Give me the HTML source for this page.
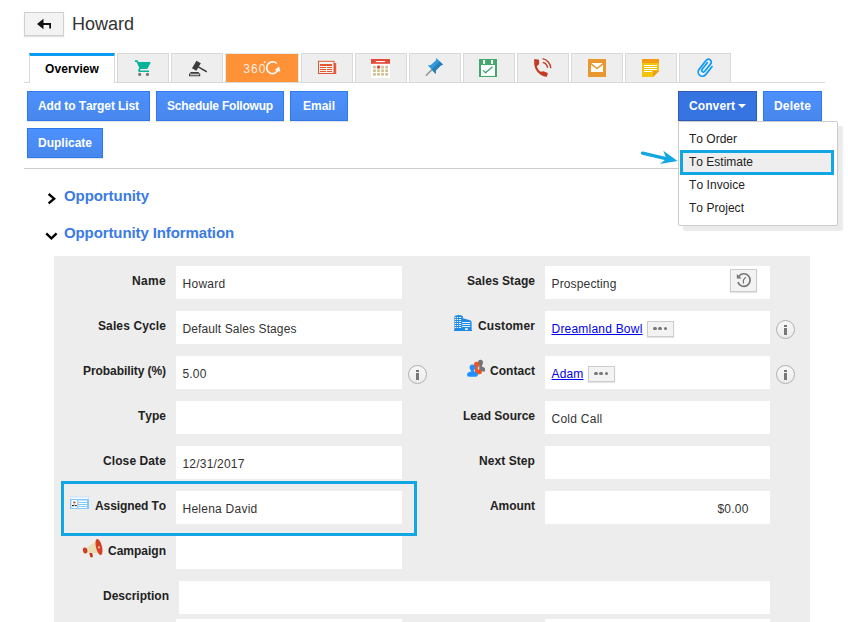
<!DOCTYPE html>
<html><head><meta charset="utf-8">
<title>Howard</title>
<style>
*{box-sizing:border-box;}
html,body{margin:0;padding:0;}
body{font-kerning:none;width:848px;height:622px;overflow:hidden;background:#fff;font-family:"Liberation Sans",Arial,sans-serif;font-size:12px;color:#222;position:relative;}
.abs{position:absolute;}
svg{position:absolute;overflow:visible;}
.back{left:24px;top:12px;width:40px;height:24px;background:#f3f3f3;border:1px solid #d0d0d0;box-shadow:0 1px 1px rgba(0,0,0,.12);}
.title{left:72px;top:13px;font-size:18px;line-height:22px;color:#333;white-space:nowrap;}
.ovw{left:45px;top:62px;font-weight:bold;font-size:12px;color:#000;line-height:14px;white-space:nowrap;}
.tab{position:absolute;top:53px;height:29px;width:52px;background:#eee;border:1px solid #d9d9d9;border-bottom:none;}
.tab.act{background:#fff;border-top:3px solid #0a9cf5;height:30px;}
.tab.t360{background:#ff9137;border-color:#e6e9ea;}
.tabline{left:24px;top:82px;width:801px;height:1px;background:#d9d9d9;}
.btn{position:absolute;height:30px;line-height:28px;color:#fff;font-weight:bold;font-size:12px;text-align:center;border:1px solid #3079ed;background:linear-gradient(#4d90fe,#4787ed);box-shadow:0 1px 1px rgba(0,0,0,.1);white-space:nowrap;}
.caret{left:738px;top:104px;width:0;height:0;border:4px solid transparent;border-top-color:#fff;}
.hr{left:24px;top:168px;width:654px;height:1px;background:#ccc;}
.sec{position:absolute;font-size:15px;font-weight:bold;color:#3b7be5;white-space:nowrap;line-height:18px;}
.panel{left:54px;top:256px;width:756px;height:366px;background:#ededed;}
.lbl{position:absolute;font-weight:bold;font-size:12px;color:#222;text-align:right;white-space:nowrap;line-height:14px;width:140px;}
.inp{position:absolute;background:#fff;height:33px;line-height:14px;padding:11px 0 0 6.5px;font-size:12px;color:#333;white-space:nowrap;}
.inp a{color:#0000ee;text-decoration:underline;}
.info{position:absolute;width:19px;height:19px;border:1px solid #b0b0b0;border-radius:50%;background:linear-gradient(#f8f8f8,#ececec);}
.info:before{content:"";position:absolute;left:7px;top:4px;width:3px;height:2px;background:#777;}
.info:after{content:"";position:absolute;left:7px;top:7px;width:3px;height:7px;background:#777;}
.more{position:absolute;width:27px;height:16px;background:#f3f3f3;border:1px solid #ccc;box-shadow:0 1px 1px rgba(0,0,0,.1);}
.more i{position:absolute;top:5px;width:3.4px;height:3.4px;border-radius:50%;background:#777;}
.hist{left:730px;top:269px;width:27px;height:23px;background:#f3f3f3;border:1px solid #ccc;box-shadow:0 1px 1px rgba(0,0,0,.1);}
.dd{left:678px;top:121px;width:160px;height:105px;background:#fff;border:1px solid #ccc;border-radius:2px;box-shadow:5px 5px 1px rgba(0,0,0,.08);}
.ddi{position:absolute;left:689px;font-size:12px;color:#222;line-height:14px;white-space:nowrap;}
.hl{position:absolute;border:3px solid #12a6e2;}
</style></head><body>
<div class="abs back"></div>
<div class="abs title" style="letter-spacing:-0.004px;">Howard</div>
<div class="abs tabline"></div>
<div class="tab act" style="left:29px;width:86px;"></div>
<div class="abs ovw" style="letter-spacing:0.079px;">Overview</div>
<div class="tab" style="left:117px"></div>
<div class="tab" style="left:171px"></div>
<div class="tab t360" style="left:225px;width:74px;"></div>
<div class="tab" style="left:301px"></div>
<div class="tab" style="left:355px"></div>
<div class="tab" style="left:409px"></div>
<div class="tab" style="left:463px"></div>
<div class="tab" style="left:517px"></div>
<div class="tab" style="left:571px"></div>
<div class="tab" style="left:625px"></div>
<div class="tab" style="left:679px"></div>
<div class="btn" style="left:27px;top:91px;width:123px;letter-spacing:-0.092px;">Add to Target List</div>
<div class="btn" style="left:156px;top:91px;width:128px;letter-spacing:-0.196px;">Schedule Followup</div>
<div class="btn" style="left:290px;top:91px;width:58px;">Email</div>
<div class="btn" style="left:27px;top:128px;width:76px;">Duplicate</div>
<div class="btn" style="left:678px;top:91px;width:79px;letter-spacing:0.094px;background:#3674e2;border-color:#2f5bb7;text-align:left;padding-left:10px;">Convert</div>
<div class="abs caret"></div>
<div class="btn" style="left:763px;top:91px;width:59px;letter-spacing:0.164px;">Delete</div>
<div class="abs hr"></div>
<div class="sec" style="left:64px;top:187px;letter-spacing:-0.074px;">Opportunity</div>
<div class="sec" style="left:64px;top:224px;letter-spacing:-0.108px;">Opportunity Information</div>
<div class="abs panel"></div>
<div class="lbl" style="left:26px;top:274px;letter-spacing:0.329px;">Name</div>
<div class="inp" style="left:176px;top:266px;width:226px;letter-spacing:0.275px;">Howard</div>
<div class="lbl" style="left:26px;top:319px;letter-spacing:0.117px;">Sales Cycle</div>
<div class="inp" style="left:176px;top:311px;width:226px;letter-spacing:0.097px;">Default Sales Stages</div>
<div class="lbl" style="left:26px;top:364px;letter-spacing:-0.067px;">Probability (%)</div>
<div class="inp" style="left:176px;top:356px;width:226px;letter-spacing:0.161px;">5.00</div>
<div class="lbl" style="left:26px;top:409px;">Type</div>
<div class="inp" style="left:176px;top:401px;width:226px;"></div>
<div class="lbl" style="left:26px;top:454px;letter-spacing:0.098px;">Close Date</div>
<div class="inp" style="left:176px;top:446px;width:226px;letter-spacing:0.194px;">12/31/2017</div>
<div class="lbl" style="left:26px;top:499px;letter-spacing:-0.091px;">Assigned To</div>
<div class="inp" style="left:176px;top:491px;width:226px;letter-spacing:0.247px;">Helena David</div>
<div class="lbl" style="left:26px;top:544px;">Campaign</div>
<div class="inp" style="left:176px;top:536px;width:226px;"></div>
<div class="lbl" style="left:29px;top:589px;">Description</div>
<div class="inp" style="left:179px;top:581px;width:591px"></div>
<div class="inp" style="left:176px;top:619px;width:226px"></div>
<div class="inp" style="left:545px;top:619px;width:225px"></div>
<div class="lbl" style="left:395px;top:274px;letter-spacing:0.057px;">Sales Stage</div>
<div class="inp" style="left:545px;top:266px;width:225px;letter-spacing:0.148px;">Prospecting</div>
<div class="lbl" style="left:395px;top:319px;letter-spacing:0.124px;">Customer</div>
<div class="inp" style="left:545px;top:311px;width:225px;letter-spacing:0.212px;"><a>Dreamland Bowl</a></div>
<div class="lbl" style="left:395px;top:364px;letter-spacing:0.048px;">Contact</div>
<div class="inp" style="left:545px;top:356px;width:225px;letter-spacing:0.163px;"><a>Adam</a></div>
<div class="lbl" style="left:395px;top:409px;">Lead Source</div>
<div class="inp" style="left:545px;top:401px;width:225px;letter-spacing:0.257px;">Cold Call</div>
<div class="lbl" style="left:395px;top:454px;letter-spacing:0.072px;">Next Step</div>
<div class="inp" style="left:545px;top:446px;width:225px;"></div>
<div class="lbl" style="left:395px;top:499px;letter-spacing:-0.054px;">Amount</div>
<div class="inp" style="left:545px;top:491px;width:225px;text-align:right;padding-right:21.5px;letter-spacing:0.194px;">$0.00</div>
<div class="more" style="left:647px;top:321px"><i style="left:5.4px"></i><i style="left:10.4px"></i><i style="left:15.5px"></i></div>
<div class="more" style="left:588px;top:366px"><i style="left:5.4px"></i><i style="left:10.4px"></i><i style="left:15.5px"></i></div>
<div class="abs hist"></div>
<div class="info" style="left:776px;top:320px"></div>
<div class="info" style="left:776px;top:365px"></div>
<div class="info" style="left:408px;top:365px"></div>
<div class="hl" style="left:61px;top:481px;width:356px;height:55px"></div>
<div class="abs dd"></div>
<div class="hl" style="left:680px;top:150px;width:154px;height:25px;background:#eee"></div>
<div class="ddi" style="top:132px;">To Order</div>
<div class="ddi" style="top:155px;">To Estimate</div>
<div class="ddi" style="top:178px;letter-spacing:0.064px;">To Invoice</div>
<div class="ddi" style="top:201px;letter-spacing:0.031px;">To Project</div>
<svg style="left:0;top:0" width="848" height="622" viewBox="0 0 848 622">
<!-- back arrow -->
<path d="M37 24 L43.5 18.8 L43.5 23 L51 23 L51 28.5 L49.2 28.5 L49.2 25 L43.5 25 L43.5 29.2 Z" fill="#111"/>
<!-- cart -->
<g transform="translate(134.2 58.8) scale(0.78)">
<path fill="#00b39b" d="M1 2v2h2l3.600 7.590-1.350 2.450c-.16.280-.25.610-.25.960 0 1.100.9 2 2 2h12v-2H7.420c-.14 0-.25-.110-.25-.25l.03-.12.9-1.630h7.450c.75 0 1.410-.410 1.750-1.030l3.580-6.490c.08-.14.12-.31.12-.48 0-.55-.45-1-1-1H5.210l-.94-2H1z"/>
<circle cx="7" cy="20" r="2" fill="#757575"/><circle cx="17" cy="20" r="2" fill="#757575"/>
</g>
<!-- gavel -->
<g fill="#3c3c3c">
<path d="M196.5 60.8 L200.8 63.3 L196.4 70.8 L192 68.2 Z"/>
<path d="M198.6 66.2 L207 71 L206.4 72.6 L197.9 67.6 Z"/>
<path d="M190.6 72 L198.7 72 L199.3 73.5 L190 73.5 Z"/>
<path d="M189 73.5 H200.2 V76.2 H189 Z M190.1 74.3 V75.2 H199.1 V74.3 Z" fill-rule="evenodd"/>
</g>
<!-- 360 -->
<text x="243.2" y="72.6" font-family="Liberation Sans, sans-serif" font-size="12" fill="#fff" fill-opacity=".88" textLength="22.2" lengthAdjust="spacing">360</text>
<circle cx="264.7" cy="62.1" r="1" fill="#fff" fill-opacity=".85"/>
<path d="M276.7 63.5 A5.9 5.9 0 1 0 278.1 69.8" fill="none" stroke="#fff" stroke-width="1.6"/>
<path d="M274.6 69.9 L279.1 66.6 L280.4 71.8 Z" fill="#fff"/>
<!-- news -->
<rect x="334" y="63" width="2.2" height="11" fill="#e9583a"/>
<rect x="318.5" y="61.3" width="15.5" height="12.2" fill="#eef5f5" stroke="#e8532f" stroke-width="1"/>
<rect x="320" y="64" width="12" height="2" fill="#e8532f"/>
<g fill="#e8532f"><rect x="320" y="67" width="6" height="1"/><rect x="327" y="67" width="5" height="1"/><rect x="320" y="69" width="6" height="1"/><rect x="327" y="69" width="5" height="1"/><rect x="320" y="71" width="6" height="1"/><rect x="327" y="71" width="5" height="1"/></g>
<!-- calendar -->
<rect x="371" y="59" width="19" height="19" fill="#fff"/>
<rect x="371" y="59" width="19" height="4.8" fill="#e44a38"/>
<rect x="375.8" y="61" width="9.3" height="1.1" fill="#fff"/>
<g fill="#cfc18e">
<rect x="373.1" y="65.8" width="2.7" height="2.7"/><rect x="381.2" y="65.8" width="2.7" height="2.7"/><rect x="385.3" y="65.8" width="2.7" height="2.7"/>
<rect x="373.1" y="69.4" width="2.7" height="2.7"/><rect x="377.2" y="69.4" width="2.7" height="2.7"/><rect x="381.2" y="69.4" width="2.7" height="2.7"/><rect x="385.3" y="69.4" width="2.7" height="2.7"/>
<rect x="373.1" y="73" width="2.7" height="2.7"/><rect x="377.2" y="73" width="2.7" height="2.7"/><rect x="381.2" y="73" width="2.7" height="2.7"/><rect x="385.3" y="73" width="2.7" height="2.7"/>
</g>
<rect x="377.2" y="65.6" width="2.7" height="2.9" fill="#e03a2a"/>
<!-- pin -->
<path d="M431.9 69.8 L426.3 75.3" stroke="#7f8c8d" stroke-width="1.2" stroke-linecap="round"/>
<path d="M436.4 57.9 L443.1 64.7 L440.8 65.6 L436 70.3 L435.6 73.9 L427.9 65.3 L430.8 65.1 L435.8 60.6 Z" fill="#3498db"/>
<path d="M439.75 61.3 L443.1 64.7 L440.8 65.6 L436 70.3 L435.6 73.9 L431.75 69.6 Z" fill="#2980b9"/>
<!-- cal check -->
<rect x="479" y="59" width="18" height="18" fill="#41a96b"/>
<rect x="481" y="65" width="14" height="10.9" fill="#fff"/>
<rect x="483" y="60" width="2.1" height="3.9" fill="#fff"/><rect x="491" y="60" width="2.1" height="3.9" fill="#fff"/>
<path d="M483.1 70.4 L485.5 72.8 L492.5 66.7" fill="none" stroke="#41a96b" stroke-width="1.3"/>
<!-- phone -->
<path d="M534.2 59.1 L539 59.7 L539.2 64.1 L536.7 66.4 Q538 70 540.7 71.8 L543.4 71.2 L547.9 73 L546.9 76.8 Q542 76.5 538.5 73 Q534.5 69 534.2 63.7 Z" fill="#c23b22"/>
<path d="M542.8 62.4 A6.8 6.8 0 0 1 547.7 67.8" fill="none" stroke="#c23b22" stroke-width="1.3"/>
<path d="M542.5 58.7 A10.3 10.3 0 0 1 550.8 68.2" fill="none" stroke="#c23b22" stroke-width="1.3"/>
<!-- mail -->
<rect x="588" y="59" width="18" height="18" fill="#e8982e"/>
<rect x="591" y="63" width="12" height="9" fill="#fff"/>
<path d="M590.6 63.4 L597 68.6 L603.4 63.4" fill="none" stroke="#e8982e" stroke-width="1.4"/>
<!-- note -->
<path d="M642 59 H659 V71 L653 77 H642 Z" fill="#f1c40f"/>
<rect x="642" y="59" width="17" height="4" fill="#f39c12"/>
<path d="M653 71 H659 L653 77 Z" fill="#f39c12"/>
<g fill="#fff"><rect x="644" y="65" width="13" height="1"/><rect x="644" y="67" width="13" height="1"/><rect x="644" y="69" width="13" height="1"/><rect x="644" y="71" width="8" height="1"/></g>
<!-- clip -->
<g transform="matrix(0.787 0.618 0.618 -0.787 698.1 70.65)">
<path d="M8.45 11.85 L8.45 1.6 A4.22 4.22 0 0 0 0 1.6 L0 13.1 A2.85 2.85 0 0 0 5.7 13.1 L5.7 3.6 A1.7 1.7 0 0 0 2.3 3.6 L2.3 11.9" fill="none" stroke="#0d9bf5" stroke-width="1.7" stroke-linecap="round"/>
</g>
<!-- chevrons -->
<path d="M48.6 194 L54.2 198.7 L48.6 203.4" fill="none" stroke="#000" stroke-width="2.3"/>
<path d="M46.2 233.4 L51.4 238.4 L56.6 233.4" fill="none" stroke="#000" stroke-width="2.3"/>
<!-- history -->
<path d="M737.9 282.1 A6.3 6.3 0 1 0 738.7 276.4" fill="none" stroke="#777" stroke-width="1.7"/>
<path d="M736.8 274 V278.5 L741.6 278.6 Z" fill="#777"/>
<path d="M743.4 283.6 V280.2 L745.6 277.2" fill="none" stroke="#777" stroke-width="1.2"/>
<!-- building -->
<g fill="#1e88e5">
<path d="M454.4 330.8 V317.2 Q454.4 315 458.6 315 Q462.9 315 462.9 317.2 V330.8 Z"/>
<path d="M462.9 318.2 L470 320.3 Q471.6 320.8 471.6 322.4 V330.8 H462.9 Z"/>
<rect x="454" y="329.7" width="18" height="1.4" rx=".6"/>
</g>
<g fill="#e6f1fb">
<rect x="454.9" y="317" width="1.4" height="1"/><rect x="457" y="317" width="1.2" height="1"/><rect x="459" y="317" width="2.2" height="1"/>
<rect x="454.9" y="319" width="1.4" height="1"/><rect x="457" y="319" width="1.2" height="1"/><rect x="459" y="319" width="2.2" height="1"/>
<rect x="454.9" y="321" width="1.4" height="1"/><rect x="457" y="321" width="1.2" height="1"/><rect x="459" y="321" width="2.2" height="1"/>
<rect x="454.9" y="323" width="1.4" height="1"/><rect x="457" y="323" width="1.2" height="1"/><rect x="459" y="323" width="2.2" height="1"/>
<rect x="454.9" y="325" width="1.4" height="1"/><rect x="457" y="325" width="1.2" height="1"/><rect x="459" y="325" width="2.2" height="1"/>
<rect x="454.9" y="327" width="1.4" height="1"/><rect x="457" y="327" width="1.2" height="1"/><rect x="459" y="327" width="2.2" height="1"/>
<rect x="462.2" y="322" width="8" height="1"/><rect x="462.2" y="324" width="8" height="1"/><rect x="462.2" y="326" width="8" height="1"/>
<rect x="465" y="328.3" width="2.8" height="1.6" fill="#fff"/>
</g>
<!-- contacts -->
<g fill="#757575"><ellipse cx="480.5" cy="362.6" rx="2.5" ry="2.9"/><path d="M479.2 364 H482 V366.5 L485 368 V371.6 H479.2 Z"/></g>
<g fill="#f4511e"><ellipse cx="476.5" cy="364.7" rx="2.5" ry="3"/><path d="M475.3 366 H477.8 V369.2 Q481.9 370.3 481.9 372.6 Q481.9 374.3 479.5 374.3 H474.6 Z"/></g>
<g fill="#1e90ff"><ellipse cx="472.4" cy="367.5" rx="2.8" ry="3.1"/><path d="M471 369 H473.9 V371.6 Q477.9 372.4 477.9 374.8 Q477.9 376.7 475.5 376.7 H469.4 Q467 376.7 467 374.8 Q467 372.4 471 371.6 Z"/></g>
<!-- card -->
<rect x="70" y="496" width="19" height="3" fill="#d5e8f8"/>
<rect x="71" y="497.6" width="17" height="1.2" fill="#fff"/>
<rect x="70" y="499" width="19" height="10" rx=".8" fill="#80c8fe"/>
<rect x="71.4" y="500" width="5.8" height="8" fill="#fff"/>
<ellipse cx="74.3" cy="502.4" rx="1.3" ry="1" fill="#a0522d"/>
<rect x="73.6" y="502.8" width="1.5" height="2.6" fill="#f4b8b0"/>
<rect x="72" y="505" width="1.9" height="1.2" fill="#222"/><rect x="74.8" y="505" width="1.9" height="1.2" fill="#222"/>
<g fill="#fff"><rect x="78.2" y="500.5" width="8.8" height="1.5"/><rect x="78.2" y="503" width="8.8" height="1"/><rect x="78.2" y="505" width="8.8" height="1"/><rect x="78.2" y="506.9" width="8.8" height="1.1"/></g>
<!-- megaphone -->
<path d="M89.3 553 L92 552.6 L93 556.7 L90.5 557.4 Z" fill="#c8321a"/>
<path d="M86.9 547.6 L95.6 541.2 L98.3 553.2 L87.3 552.7 Z" fill="#e8dcb4"/>
<ellipse cx="85.2" cy="550.5" rx="2.2" ry="3" fill="#cf3a22" transform="rotate(-10 85.2 550.5)"/>
<ellipse cx="99" cy="547" rx="3" ry="8.2" fill="#d63f25" transform="rotate(-14 99 547)"/>
<rect x="98.2" y="546.4" width="1.6" height="2" fill="#eadcae"/>
<!-- arrow -->
<path d="M642.6 153.2 L668 159.2" stroke="#12a6e2" stroke-width="3.4" stroke-linecap="round" fill="none"/><path d="M677.5 161 L663.3 150.8 L666.5 158.8 L659.8 164 Z" fill="#12a6e2"/>
</svg>

</body></html>
